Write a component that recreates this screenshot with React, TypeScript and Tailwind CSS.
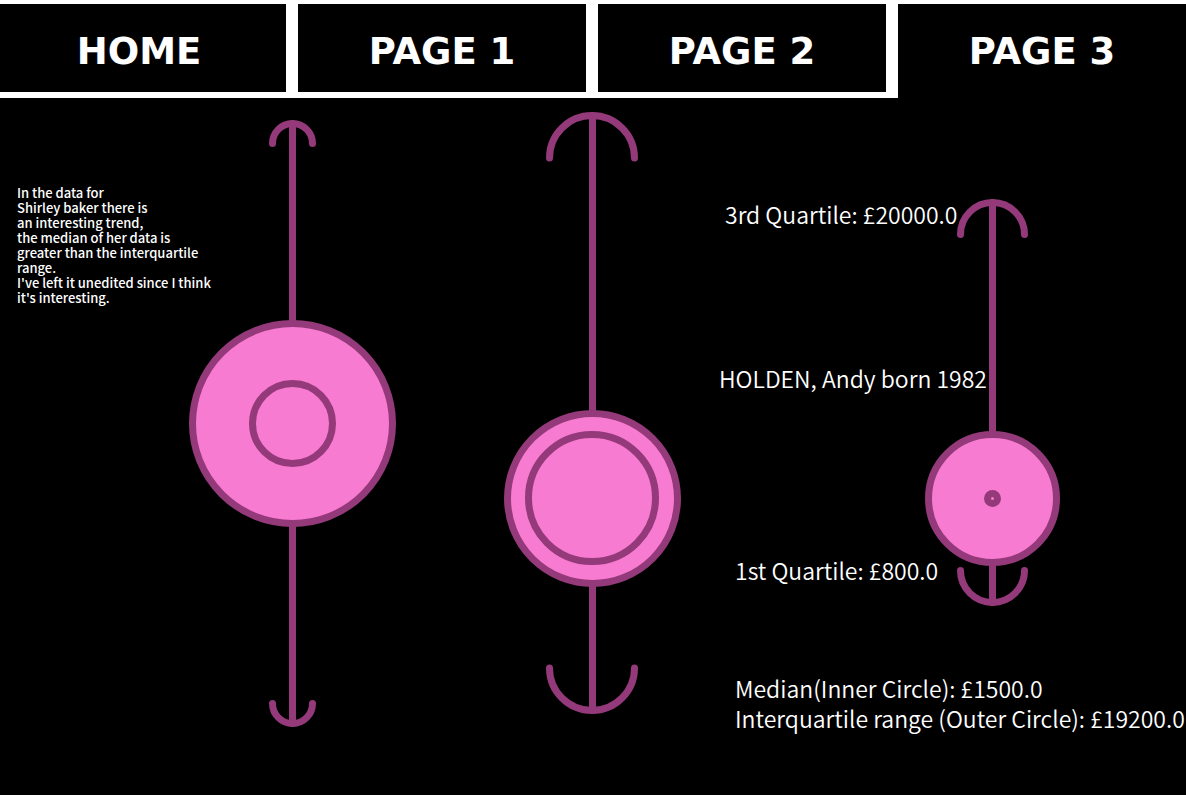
import React from 'react';

type Summary = {
  name: string;
  viewBox: string;
  width: number;
  x: number;
  y: number;
  outer: number;
  inner: number;
  innerX: number;
  innerY: number;
  capX: number;
  cap: number;
  top: number;
  bottom: number;
};

const baker: Summary = {
  name: 'Shirley Baker', viewBox: '189 98 207 697', width: 207,
  x: 292.5, y: 423.5, outer: 100, inner: 40, innerX: 292.5, innerY: 423.5,
  capX: 292.5, cap: 20, top: 123.5, bottom: 723.5,
};

const second: Summary = {
  name: 'Second artist', viewBox: '504 98 177 697', width: 177,
  x: 592.5, y: 498.5, outer: 85, inner: 63.5, innerX: 592, innerY: 498,
  capX: 592, cap: 42.5, top: 115.5, bottom: 710.5,
};

const holden: Summary = {
  name: 'Andy Holden', viewBox: '925 98 135 697', width: 135,
  x: 992.5, y: 498.5, outer: 64, inner: 5, innerX: 992.5, innerY: 498.5,
  capX: 992.5, cap: 32, top: 202.5, bottom: 602.5,
};

function Anchor({ data }: { data: Summary }) {
  const { capX, cap, top, bottom } = data;
  const left = capX - cap;
  const right = capX + cap;
  return (
    <svg
      role="img"
      aria-label={data.name}
      viewBox={data.viewBox}
      width={data.width}
      height={697}
      className="col-start-1 row-start-1 block justify-self-end stroke-[#943979]"
      strokeWidth={7}
      strokeLinecap="round"
      fill="none"
    >
      <line x1={data.x} y1={top} x2={data.x} y2={bottom} />
      <path d={`M${left} ${top + cap}A${cap} ${cap} 0 0 1 ${right} ${top + cap}`} />
      <path d={`M${left} ${bottom - cap}A${cap} ${cap} 0 0 0 ${right} ${bottom - cap}`} />
      <circle cx={data.x} cy={data.y} r={data.outer} className="fill-[#f87bd2]" />
      <circle cx={data.innerX} cy={data.innerY} r={data.inner} className="fill-[#f87bd2]" />
    </svg>
  );
}

const tab =
  "flex items-center justify-center bg-black font-['DejaVu_Sans',sans-serif] text-[37px] leading-10 font-bold whitespace-nowrap text-white";

export default function App() {
  return (
    <div className="min-h-screen overflow-x-hidden bg-black font-['Noto_Sans_CJK_SC','Noto_Sans',sans-serif] text-white">
      <nav className="grid grid-cols-[286fr_288fr_288fr_288fr] gap-3 bg-white pt-1">
        <a href="#home" className={`${tab} mb-1.5 h-[88px] pt-2 pr-2`}>HOME</a>
        <a href="#page-1" className={`${tab} mb-1.5 h-[88px] pt-2`}>PAGE 1</a>
        <a href="#page-2" className={`${tab} mb-1.5 h-[88px] pt-2`}>PAGE 2</a>
        <a href="#page-3" aria-current="page" className={`${tab} pt-0.5`}>PAGE 3</a>
      </nav>
      <main className="grid grid-cols-[minmax(0,396fr)_minmax(0,323fr)_minmax(0,467fr)]">
        <section className="grid">
          <Anchor data={baker} />
          <p className="col-start-1 row-start-1 pt-[87px] pl-[17px] text-[13px] leading-[15px] font-medium whitespace-nowrap">
            In the data for<br />
            Shirley baker there is<br />
            an interesting trend,<br />
            the median of her data is<br />
            greater than the interquartile<br />
            range.<br />
            I've left it unedited since I think<br />
            it's interesting.
          </p>
        </section>
        <section className="grid pr-[38px]">
          <Anchor data={second} />
        </section>
        <section className="grid grid-cols-1">
          <div className="col-start-1 row-start-1 grid pr-[126px]">
            <Anchor data={holden} />
          </div>
          <div className="col-start-1 row-start-1 pt-[101px] text-[23px] leading-[30px] font-[350] whitespace-nowrap">
            <p className="pl-1.5">3rd Quartile: £20000.0</p>
            <h1 className="pt-[134px] font-[350]">HOLDEN, Andy born 1982</h1>
            <p className="pt-[162px] pl-4">1st Quartile: £800.0</p>
            <p className="pt-[88px] pl-4">Median(Inner Circle): £1500.0</p>
            <p className="pl-4">Interquartile range (Outer Circle): £19200.0</p>
          </div>
        </section>
      </main>
    </div>
  );
}
